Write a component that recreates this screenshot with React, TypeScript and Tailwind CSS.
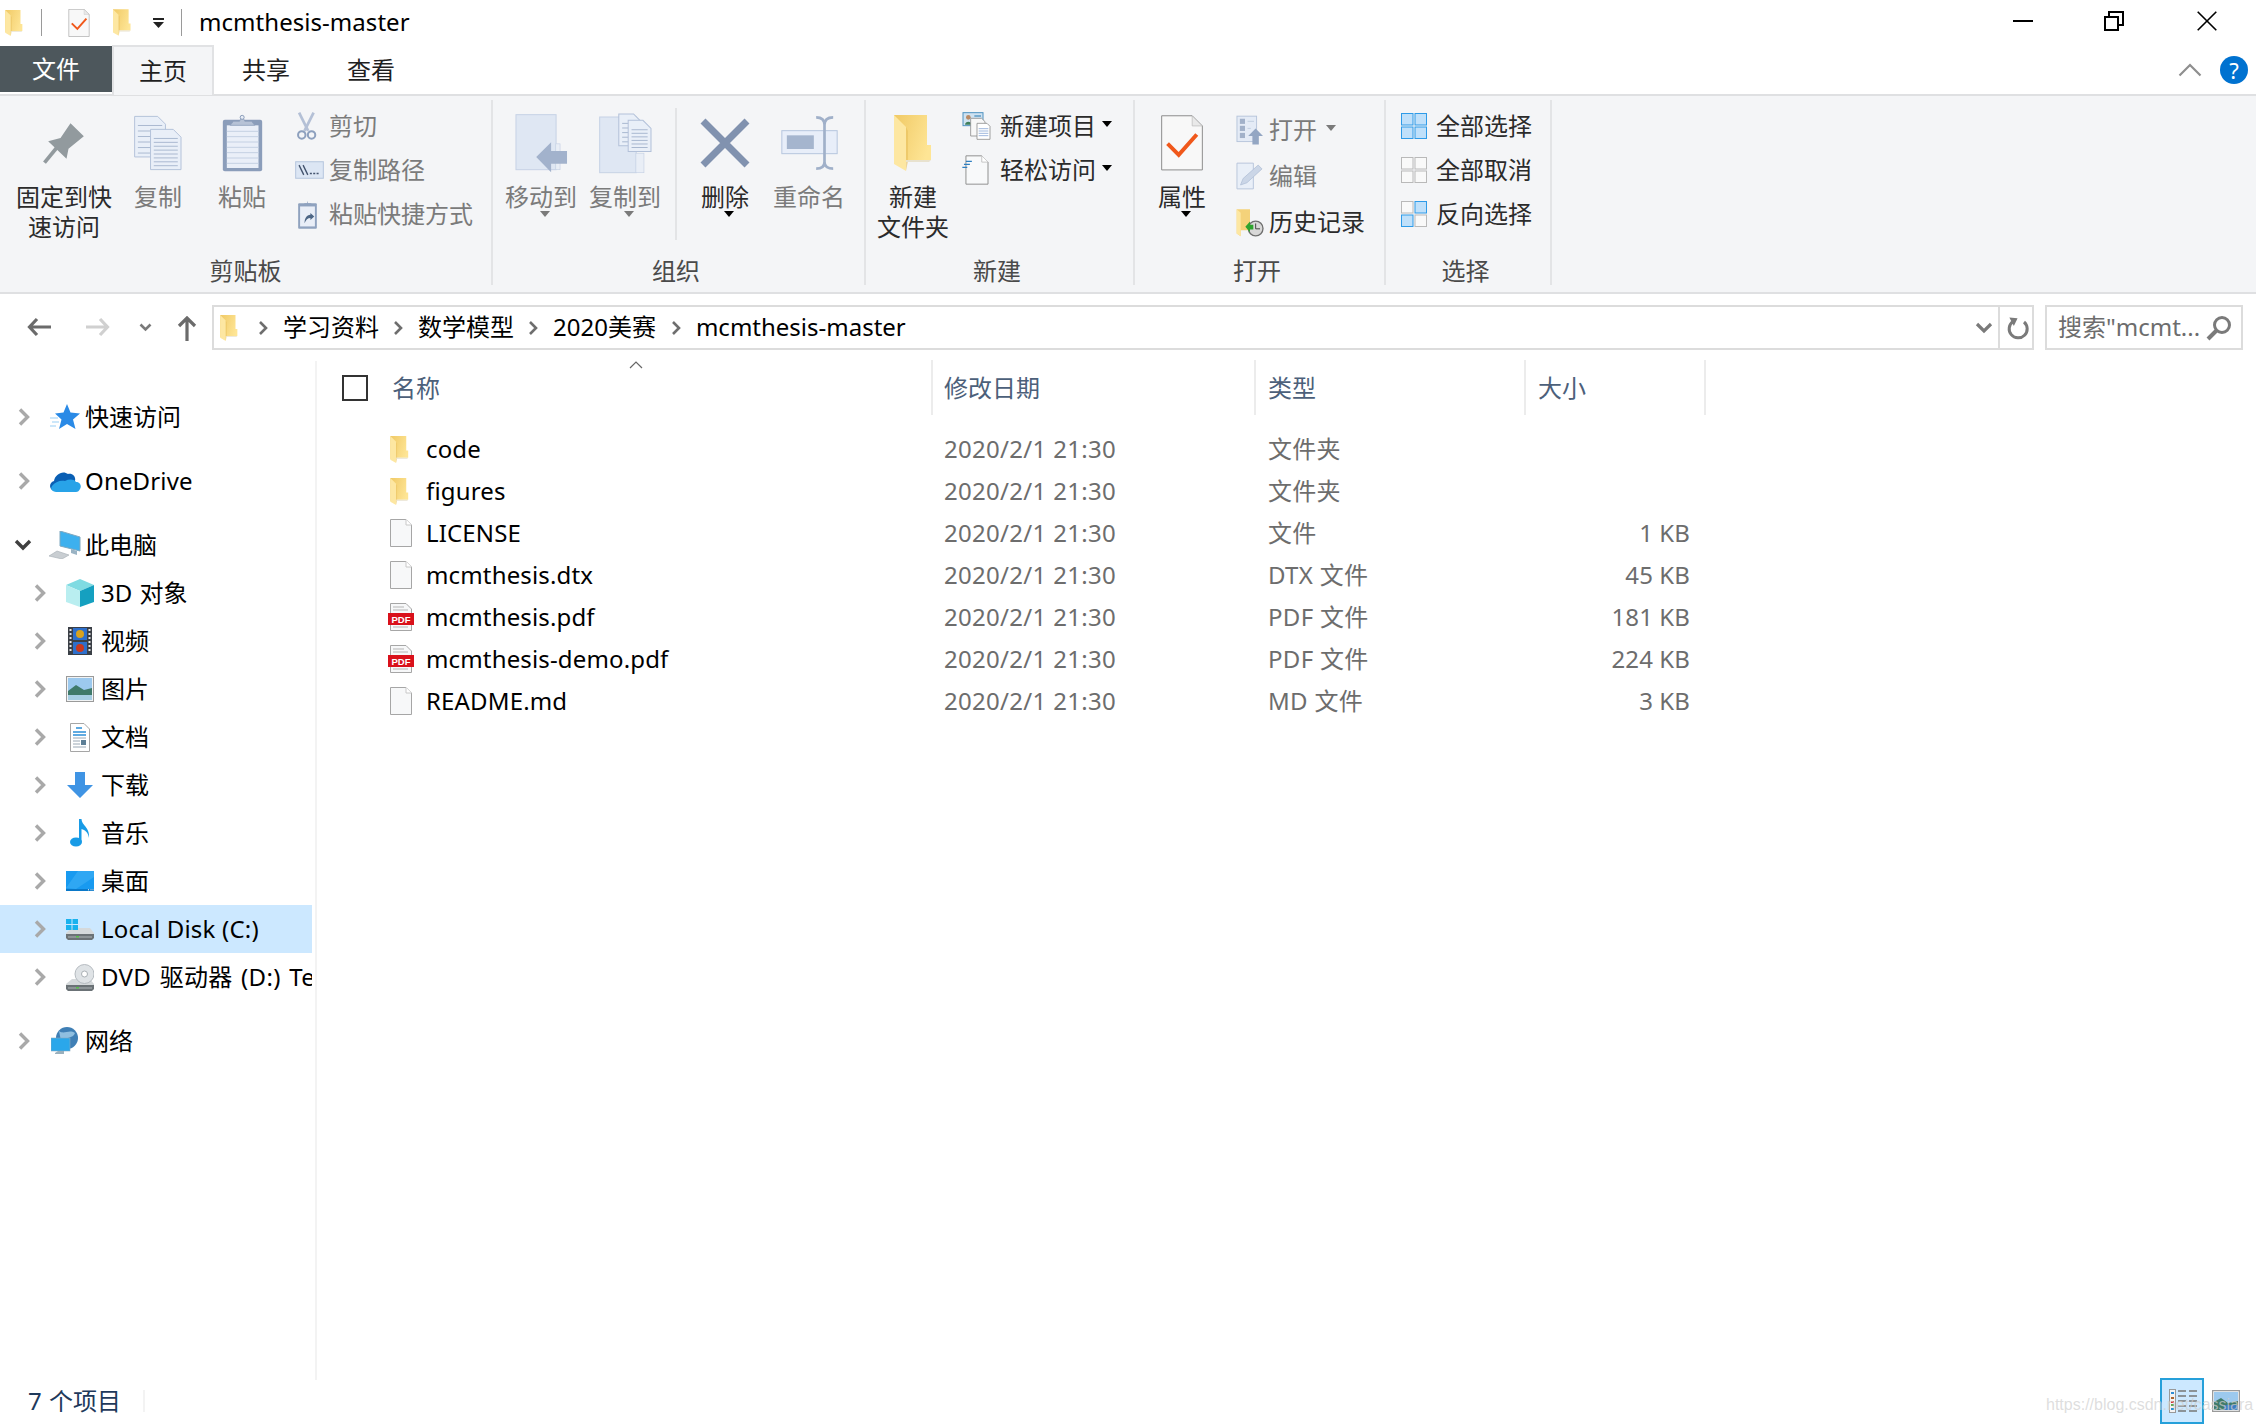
import React from "react";

const Folder = ({ w, h }: { w: number; h: number }) => (
  <svg width={w} height={h} viewBox="0 0 38 56" className="shrink-0">
    <defs>
      <linearGradient id="fg" x1="0" y1="0" x2="1" y2="0.5">
        <stop offset="0" stopColor="#f0c965" />
        <stop offset="1" stopColor="#fee595" />
      </linearGradient>
    </defs>
    <path d="M0 0H33V30H37V45H12V54L0 47Z" fill="url(#fg)" />
    <path d="M0 0L12 12V56L0 49Z" fill="#fde7a2" />
    <path d="M12 12V56L14 46V16Z" fill="#e8bf5e" opacity=".6" />
    <path d="M12 45H37L35 47H12Z" fill="#e8e2cf" />
  </svg>
);

const BlankFile = () => (
  <svg width="22" height="28" viewBox="0 0 22 28" className="shrink-0">
    <path d="M.5.5H16L21.5 6V27.5H.5Z" fill="#f7f8f9" stroke="#a6a6a6" />
    <path d="M16 .5V6H21.5" fill="#fff" stroke="#c8c8c8" />
  </svg>
);

const PdfFile = () => (
  <svg width="26" height="28" viewBox="0 0 26 28" className="shrink-0">
    <path d="M2.5.5H18L23.5 6V27.5H2.5Z" fill="#f7f8f9" stroke="#a6a6a6" />
    <path d="M5 4H16M5 7H20M5 24H20" stroke="#b5b5b5" />
    <rect x="0" y="10" width="26" height="12" fill="#d9111b" />
    <text x="13" y="19.5" textAnchor="middle" fontSize="9.5" fontWeight="700" fill="#fff" fontFamily="Liberation Sans, sans-serif">PDF</text>
  </svg>
);

const Chevron = ({ open, className = "" }: { open?: boolean; className?: string }) =>
  open ? (
    <svg width="18" height="12" viewBox="0 0 18 12" className={className}>
      <path d="M2 2L9 9L16 2" fill="none" stroke="#404040" strokeWidth="3.4" />
    </svg>
  ) : (
    <svg width="12" height="18" viewBox="0 0 12 18" className={className}>
      <path d="M2 1.5L9.5 9L2 16.5" fill="none" stroke="#a9a9a9" strokeWidth="3.4" />
    </svg>
  );

const Caret = ({ dim }: { dim?: boolean }) => (
  <svg width="10" height="6" viewBox="0 0 10 6" className="shrink-0 block">
    <path d="M0 0H10L5 6Z" fill={dim ? "#7a7a7a" : "#000"} />
  </svg>
);

/* ribbon icons: viewBoxes follow measured crop coordinates */
const Pin = () => (
  <svg width="42" height="42" viewBox="130 62 125 126">
    <path d="M134 184L170 140" stroke="#929a9e" strokeWidth="11" />
    <path d="M145 120L182 110L212 66L252 105L206 142L200 172Z" fill="#929a9e" />
  </svg>
);
const Page = ({ x, y, w, h, lines = 6 }: { x: number; y: number; w: number; h: number; lines?: number }) => (
  <g>
    <path d={`M${x} ${y}H${x + w - 24}L${x + w} ${y + 24}V${y + h}H${x}Z`} fill="#e9eff8" stroke="#b3c1d9" strokeWidth="3" />
    {Array.from({ length: lines }).map((_, i) => (
      <path key={i} d={`M${x + 10} ${y + 28 + (i * (h - 40)) / Math.max(lines - 1, 1)}H${x + w - 10}`} stroke="#a9b8d0" strokeWidth="3" />
    ))}
  </g>
);
const CopyIcon = () => (
  <svg width="48" height="56" viewBox="403 40 148 168">
    <Page x={405} y={42} w={95} h={125} />
    <Page x={454} y={82} w={94} h={124} lines={8} />
  </svg>
);
const PasteIcon = () => (
  <svg width="41" height="58" viewBox="668 38 122 174">
    <rect x="670" y="55" width="118" height="155" rx="6" fill="#8b9dba" />
    <rect x="682" y="72" width="95" height="128" fill="#eaeff8" />
    {[0, 1, 2, 3, 4, 5, 6].map((i) => (
      <path key={i} d={`M682 ${90 + i * 16}H777`} stroke="#c4d0e3" strokeWidth="3" />
    ))}
    <path d="M692 72L702 60H720L728 44L736 60H756L766 72Z" fill="#b6c2d6" stroke="#8b9dba" strokeWidth="2" />
    <circle cx="728" cy="48" r="6" fill="#e9eef6" stroke="#8b9dba" strokeWidth="3" />
  </svg>
);
const Scissors = () => (
  <svg width="21" height="29" viewBox="888 36 62 86">
    <path d="M897 38L924 92" stroke="#b4c0d6" strokeWidth="8" />
    <path d="M940 38L913 92" stroke="#b4c0d6" strokeWidth="8" />
    <circle cx="905" cy="104" r="11" fill="none" stroke="#8da0be" strokeWidth="6" />
    <circle cx="934" cy="104" r="11" fill="none" stroke="#8da0be" strokeWidth="6" />
  </svg>
);
const CopyPath = () => (
  <svg width="29" height="18" viewBox="878 185 86 53">
    <rect x="880" y="187" width="82" height="49" fill="#dce6f4" stroke="#b6c6de" strokeWidth="3" />
    <path d="M890 197L904 226M902 197L916 226" stroke="#44546e" strokeWidth="4" />
    <path d="M922 222h6M932 222h6M942 222h6" stroke="#44546e" strokeWidth="4" />
  </svg>
);
const PasteShort = () => (
  <svg width="21" height="29" viewBox="890 296 62 90">
    <rect x="892" y="306" width="58" height="79" rx="3" fill="#8fa2bf" />
    <rect x="898" y="316" width="46" height="62" fill="#e9eef7" />
    <path d="M906 314L912 306H920L921 298L923 306H932L938 314Z" fill="#8fa2bf" />
    <path d="M912 368C912 352 918 344 930 342V336L942 347L930 358V352C922 352 916 358 912 368Z" fill="#4d6685" />
  </svg>
);
const MoveIcon = () => (
  <svg width="55" height="59" viewBox="62 40 158 178">
    <rect x="64" y="42" width="121" height="166" fill="#dfe7f3" stroke="#c6d2e5" strokeWidth="3" />
    <rect x="184" y="130" width="13" height="78" fill="#e9eef6" stroke="#c6d2e5" strokeWidth="2" />
    <path d="M125 170L170 125V152H218V190H170V216Z" fill="#a2b2cc" />
  </svg>
);
const CopyTo = () => (
  <svg width="53" height="61" viewBox="314 32 158 178">
    <rect x="316" y="42" width="109" height="166" fill="#dfe7f3" stroke="#c6d2e5" strokeWidth="3" />
    <rect x="424" y="150" width="24" height="58" fill="#e9eef6" stroke="#c6d2e5" strokeWidth="2" />
    <Page x={373} y={33} w={68} h={95} lines={5} />
    <Page x={401} y={52} w={68} h={93} lines={6} />
  </svg>
);
const DeleteIcon = () => (
  <svg width="50" height="50" viewBox="603 51 150 150">
    <path d="M612 60L744 192M744 60L612 192" stroke="#8192af" strokeWidth="21" />
  </svg>
);
const RenameIcon = () => (
  <svg width="57" height="54" viewBox="845 44 170 162">
    <rect x="847" y="88" width="166" height="69" fill="#e8eef9" stroke="#b6c6de" strokeWidth="3" />
    <rect x="862" y="102" width="81" height="41" fill="#a5b5ce" />
    <path d="M950 48C964 48 975 54 975 70V182C975 196 964 202 950 202M1001 48C987 48 975 54 975 70M1001 202C987 202 975 196 975 182" fill="none" stroke="#a0b0c9" strokeWidth="8" />
  </svg>
);
const NewItem = () => (
  <svg width="29" height="28" viewBox="252 36 85 84">
    <rect x="254" y="38" width="60" height="39" fill="#cfe2f1" stroke="#4e92c0" strokeWidth="3" />
    <circle cx="270" cy="52" r="7" fill="#b98a66" />
    <path d="M260 74C260 62 280 62 280 74Z" fill="#3f7f5a" />
    <path d="M288 48h20" stroke="#4e92c0" strokeWidth="4" />
    <path d="M277 55H310L320 65V108H277Z" fill="#f8f8f8" stroke="#8f8f8f" strokeWidth="2.5" />
    <path d="M296 70H326L335 79V118H296Z" fill="#fff" stroke="#8f8f8f" strokeWidth="2.5" />
    <path d="M301 86H330M301 93H330M301 100H330M301 107H330" stroke="#8da9d6" strokeWidth="2.5" />
  </svg>
);
const EasyAccess = () => (
  <svg width="27" height="30" viewBox="246 164 82 90">
    <path d="M258 166H306L325 185V252H258Z" fill="#f8f9fa" stroke="#8f8f8f" strokeWidth="3" />
    <path d="M306 166V185H325" fill="#fff" stroke="#bbb" strokeWidth="2.5" />
    <path d="M258 183H276M252 192H270M247 201H262" stroke="#2f7fc1" strokeWidth="4" />
  </svg>
);
const PropsIcon = ({ w = 42, h = 56 }: { w?: number; h?: number }) => (
  <svg width={w} height={h} viewBox="845 41 128 170" className="shrink-0">
    <path d="M847 43H940L971 74V208H847Z" fill="#f8f8f8" stroke="#8b8b8b" strokeWidth="3" />
    <path d="M940 43V74H971Z" fill="#e9e9e9" stroke="#b5b5b5" strokeWidth="2" />
    <path d="M865 128L899 162L954 100" fill="none" stroke="#f0581b" strokeWidth="12" />
  </svg>
);
const OpenIcon = () => (
  <svg width="27" height="30" viewBox="1066 43 84 92">
    <rect x="1069" y="46" width="61" height="79" fill="#e4ebf6" stroke="#b7c5db" strokeWidth="3" />
    <rect x="1078" y="54" width="16" height="16" fill="#a2b1c9" />
    <rect x="1078" y="76" width="16" height="16" fill="#a2b1c9" />
    <rect x="1078" y="98" width="16" height="16" fill="#a2b1c9" />
    <path d="M1102 62h20M1102 84h10" stroke="#c2cee0" strokeWidth="3" />
    <path d="M1127 84L1150 108H1137V134H1117V108H1104Z" fill="#93a6c3" />
  </svg>
);
const EditIcon = () => (
  <svg width="27" height="28" viewBox="1066 181 84 86">
    <path d="M1069 184H1120V264H1069Z" fill="#e9eff8" stroke="#b7c5db" strokeWidth="3" />
    <path d="M1080 252L1088 232L1135 190L1147 202L1100 245Z" fill="#cbd6e7" stroke="#a9b9d2" strokeWidth="2" />
  </svg>
);
const HistoryIcon = () => (
  <svg width="28" height="29" viewBox="1066 324 84 86">
    <path d="M1068 327H1108V390H1080V408L1068 400Z" fill="#f4d27a" />
    <path d="M1068 327L1080 338V408L1068 400Z" fill="#fde7a2" />
    <circle cx="1125" cy="385" r="22" fill="#d8d8d8" stroke="#6f6f6f" strokeWidth="4" />
    <path d="M1125 370V386H1138" fill="none" stroke="#444" strokeWidth="3" />
    <path d="M1094 380L1108 364V374H1118V388H1108V396Z" fill="#2ea32e" />
  </svg>
);
const Panes = ({ cells }: { cells: boolean[] }) => (
  <svg width="26" height="26" viewBox="0 0 26 26">
    {[
      [0.5, 0.5],
      [14, 0.5],
      [0.5, 14],
      [14, 14],
    ].map(([x, y], i) =>
      cells[i] ? (
        <rect key={i} x={x} y={y} width="11.5" height="11.5" fill="#bfe0fa" stroke="#2e9be8" />
      ) : (
        <rect key={i} x={x} y={y} width="11.5" height="11.5" fill="#f9f9f9" stroke="#b9b9b9" />
      )
    )}
  </svg>
);

/* nav pane icons */
const Star = () => (
  <svg width="30" height="26" viewBox="0 0 30 26">
    <path d="M17 0L20.5 8.5L30 9.5L23 15.5L25.5 25L17 20L9 25L11.5 15.5L5 9.5L13.5 8.5Z" fill="#2a8ae6" />
    <path d="M0 14H8M2 18H9M0 22H6" stroke="#9ad0f6" strokeWidth="1.2" />
  </svg>
);
const OneDrive = () => (
  <svg width="32" height="22" viewBox="0 0 32 22">
    <path d="M7 21C0 21-1 13 5 11C6 4 14 0 19 4C24 3 27 7 26 11L7 21Z" fill="#0a5fb4" />
    <path d="M7 22C3 22 1 19 3 16C6 12 11 10 16 11C20 9 25 9 27 12C31 12 33 16 31 19C30 21 29 22 27 22Z" fill="#28a3e8" />
  </svg>
);
const ThisPC = () => (
  <svg width="32" height="28" viewBox="0 0 32 28">
    <path d="M11 0L31 6V20L11 15Z" fill="#3db0ee" stroke="#7fa8c0" />
    <path d="M22 18L28 20V24L22 22Z" fill="#9ab3c4" />
    <path d="M0 25L8 20L20 24L13 28Z" fill="#c9ced2" stroke="#a5adb3" strokeWidth=".6" />
  </svg>
);
const Cube = () => (
  <svg width="28" height="28" viewBox="0 0 28 28">
    <path d="M14 0L28 6L14 12L0 6Z" fill="#7fdbe2" />
    <path d="M0 6L14 12V28L0 23Z" fill="#b9eef0" />
    <path d="M28 6L14 12V28L28 23Z" fill="#15a0c0" />
  </svg>
);
const Film = () => (
  <svg width="24" height="28" viewBox="0 0 24 28">
    <rect width="24" height="28" fill="#3a3f46" />
    <rect x="5" y="1" width="14" height="12" fill="#2e6fcb" />
    <rect x="5" y="15" width="14" height="12" fill="#2e6fcb" />
    <circle cx="12" cy="7" r="4" fill="#d9a21e" />
    <circle cx="12" cy="21" r="4" fill="#c9381f" />
    <path d="M2.5 2V26M21.5 2V26" stroke="#e5e5e5" strokeWidth="2" strokeDasharray="2 2" />
  </svg>
);
const Picture = () => (
  <svg width="28" height="26" viewBox="0 0 28 26">
    <rect x=".5" y=".5" width="27" height="25" fill="#f1f3f4" stroke="#9a9a9a" />
    <rect x="2" y="2" width="24" height="22" fill="#9cc9ee" />
    <path d="M2 15L10 9L18 14L26 12V24H2Z" fill="#3f7a6a" />
    <rect x="2" y="19" width="24" height="5" fill="#a7cfe4" />
  </svg>
);
const DocIcon = () => (
  <svg width="20" height="29" viewBox="0 0 20 29">
    <path d="M.5.5H14L19.5 6V28.5H.5Z" fill="#fff" stroke="#a6a6a6" />
    <path d="M6 5H12M3 9H16M3 12H16" stroke="#2b8fd8" strokeWidth="1.4" />
    <path d="M3 15H16M3 18H10M3 21H10M3 24H16" stroke="#9aa8b5" />
    <rect x="11" y="17" width="5" height="5" fill="#5d7f96" />
  </svg>
);
const Download = () => (
  <svg width="26" height="26" viewBox="0 0 26 26">
    <path d="M8 0H18V13H26L13 26L0 13H8Z" fill="#3f94e4" />
  </svg>
);
const Note = () => (
  <svg width="20" height="28" viewBox="0 0 20 28">
    <ellipse cx="6" cy="23" rx="6" ry="4.5" fill="#189be6" />
    <path d="M9 0H11.5C12 7 20 8 19 19C18 13 15 11 11.5 10V23H9Z" fill="#189be6" />
  </svg>
);
const Desktop = () => (
  <svg width="28" height="20" viewBox="0 0 28 20">
    <rect width="28" height="20" fill="#189af0" />
    <path d="M0 17L12 0H28V6L10 18Z" fill="#3fb0f5" opacity=".6" />
    <rect y="18" width="28" height="2" fill="#0a78c8" />
    <path d="M22 18.8h1M24.5 18.8h1M26.5 18.8h1" stroke="#fff" />
  </svg>
);
const Disk = () => (
  <svg width="28" height="21" viewBox="0 0 28 21">
    <path d="M0 14L6 9H24L28 14V19L24 21H2L0 19Z" fill="#d5d9db" />
    <path d="M0 15H28V19L26 21H2L0 19Z" fill="#6b7276" />
    <rect x="2" y="17" width="24" height="2" fill="#8d9497" />
    <rect x="10" y="17" width="3" height="1.5" fill="#58c04a" />
    <rect y="0" width="5.5" height="5" fill="#19b2ee" />
    <rect x="6.5" y="0" width="5.5" height="5" fill="#19b2ee" />
    <rect y="6" width="5.5" height="5" fill="#19b2ee" />
    <rect x="6.5" y="6" width="5.5" height="5" fill="#19b2ee" />
  </svg>
);
const Dvd = () => (
  <svg width="28" height="27" viewBox="0 0 28 27">
    <path d="M0 20L6 15H24L28 20V25L24 27H2L0 25Z" fill="#d5d9db" />
    <circle cx="18.5" cy="10" r="9.5" fill="#dfe3e6" stroke="#b5bbc0" />
    <circle cx="18.5" cy="10" r="3" fill="#fff" stroke="#aab0b5" />
    <path d="M0 21H28V25L26 27H2L0 25Z" fill="#6b7276" />
    <rect x="2" y="23" width="24" height="2" fill="#8d9497" />
    <rect x="10" y="23" width="3" height="1.5" fill="#58c04a" />
  </svg>
);
const Network = () => (
  <svg width="28" height="28" viewBox="0 0 28 28">
    <circle cx="16" cy="11" r="11" fill="#3f7fb5" />
    <path d="M8 4C13 8 18 2 24 6C22 12 14 10 10 14Z" fill="#8fbfe0" />
    <rect x="0" y="11" width="19" height="13" fill="#2aa7ea" stroke="#85a9bf" strokeWidth=".6" />
    <path d="M7 24H13V27H4V26Z" fill="#9ab0bd" />
  </svg>
);

const TEXT = "font-['Noto_Sans','Noto_Sans_CJK_SC',sans-serif]";

const Big = ({ w, icon, lines, dim, caret }: { w: number; icon: React.ReactNode; lines: string[]; dim?: boolean; caret?: "dim" | "dark" }) => (
  <div className="flex flex-col items-center shrink-0" style={{ width: w }}>
    <div className="h-[78px] flex items-center justify-center">{icon}</div>
    {lines.map((l) => (
      <div key={l} className={`h-[30px] leading-[30px] whitespace-nowrap ${dim ? "text-[#7b7b7b]" : "text-[#2b2b2b]"}`}>
        {l}
      </div>
    ))}
    {caret && (
      <div className="-mt-[1px] ml-[8px]">
        <Caret dim={caret === "dim"} />
      </div>
    )}
  </div>
);

const Small = ({ w, h, icon, text, dim, caret, gap = 6 }: { w: number; h: number; icon: React.ReactNode; text: string; dim?: boolean; caret?: "dim" | "dark"; gap?: number }) => (
  <div className="flex items-center" style={{ height: h }}>
    <div className="flex items-center shrink-0" style={{ width: w }}>
      {icon}
    </div>
    <span className={`whitespace-nowrap ${dim ? "text-[#7b7b7b]" : "text-[#2b2b2b]"}`}>{text}</span>
    {caret && (
      <span className="-mt-[4px]" style={{ marginLeft: gap }}>
        <Caret dim={caret === "dim"} />
      </span>
    )}
  </div>
);

const Group = ({ w, label, labelShift = 0, children }: { w: number; label: string; labelShift?: number; children: React.ReactNode }) => (
  <div className="h-[185px] shrink-0 flex flex-col border-r-2 border-[#e3e4e6]" style={{ width: w }}>
    <div className="flex-1 flex pt-[4px] min-h-0">{children}</div>
    <div className="h-[29px] leading-[29px] text-center text-[#4a4a4a]" style={{ paddingRight: labelShift }}>
      {label}
    </div>
  </div>
);

const NavRow = ({ child, icon, text, active, open, textCls = "" }: { child?: boolean; icon: React.ReactNode; text: string; active?: boolean; open?: boolean; textCls?: string }) => (
  <div className={`h-[48px] flex items-center whitespace-nowrap overflow-hidden ${active ? "bg-[#cce8ff]" : ""}`}>
    <div className={`shrink-0 flex justify-center ${child ? "w-[32px] ml-[24px]" : open ? "w-[32px] ml-[7px] mr-[1px]" : "w-[32px] ml-[8px]"}`}>
      <Chevron open={open} />
    </div>
    <div className={`shrink-0 flex justify-center ${child ? "w-[30px] ml-[9px]" : "w-[32px] ml-[9px]"}`}>{icon}</div>
    <span className={`text-black ${child ? "ml-[6px]" : "ml-[4px]"} ${textCls}`}>{text}</span>
  </div>
);

const files = [
  { n: "code", t: "文件夹", s: "", k: "folder" },
  { n: "figures", t: "文件夹", s: "", k: "folder" },
  { n: "LICENSE", t: "文件", s: "1 KB", k: "blank" },
  { n: "mcmthesis.dtx", t: "DTX 文件", s: "45 KB", k: "blank" },
  { n: "mcmthesis.pdf", t: "PDF 文件", s: "181 KB", k: "pdf" },
  { n: "mcmthesis-demo.pdf", t: "PDF 文件", s: "224 KB", k: "pdf" },
  { n: "README.md", t: "MD 文件", s: "3 KB", k: "blank" },
];

const Crumb = ({ text, cls }: { text: string; cls: string }) => (
  <>
    <svg width="10" height="16" viewBox="0 0 10 16" className={cls}>
      <path d="M2 2L8 8L2 14" fill="none" stroke="#6e6e6e" strokeWidth="2.6" />
    </svg>
    <span className="ml-[15px] -mt-[2px] whitespace-nowrap text-black">{text}</span>
  </>
);

export default function App() {
  return (
    <div className={`relative w-[2256px] h-[1424px] bg-white overflow-hidden flex flex-col text-[24px] ${TEXT}`}>
      {/* title bar */}
      <div className="h-[45px] flex items-center shrink-0">
        <div className="ml-[5px]">
          <Folder w={18} h={26} />
        </div>
        <div className="ml-[18px] w-[1px] h-[27px] bg-[#9a9a9a]" />
        <div className="ml-[26px]">
          <PropsIcon w={22} h={28} />
        </div>
        <div className="ml-[23px]">
          <Folder w={18} h={27} />
        </div>
        <div className="ml-[22px] flex flex-col items-center gap-[2px]">
          <div className="w-[11px] h-[2px] bg-[#222]" />
          <svg width="11" height="6" viewBox="0 0 11 6">
            <path d="M0 0H11L5.5 6Z" fill="#222" />
          </svg>
        </div>
        <div className="ml-[17px] w-[1px] h-[27px] bg-[#9a9a9a]" />
        <span className="ml-[17px] -mt-[2px] text-black tracking-[0.05px]">mcmthesis-master</span>
        <div className="ml-auto flex items-center -mt-[3px]">
          <div className="w-[20px] h-[2px] bg-black mr-[71px]" />
          <svg width="20" height="20" viewBox="0 0 20 20" className="mr-[73px]">
            <path d="M1 6H14V19H1Z M5 6V1H19V14H14" fill="none" stroke="#000" strokeWidth="2" />
          </svg>
          <svg width="20" height="20" viewBox="0 0 20 20" className="mr-[39px]">
            <path d="M.7.7L19.3 19.3M19.3.7L.7 19.3" stroke="#000" strokeWidth="1.6" />
          </svg>
        </div>
      </div>

      {/* tabs */}
      <div className="h-[49px] flex shrink-0 relative">
        <div className="w-[112px] h-[46px] mt-[1px] bg-[#4d575c] text-white flex items-center justify-center pb-[1px]">文件</div>
        <div className="w-[102px] h-[50px] bg-[#f4f5f7] border-x-2 border-t-2 border-[#e1e2e4] flex items-center justify-center text-[#1f1f1f] z-10 box-border">主页</div>
        <div className="w-[104px] flex items-center justify-center text-[#1f1f1f]">共享</div>
        <div className="w-[106px] flex items-center justify-center text-[#1f1f1f]">查看</div>
        <div className="ml-auto flex items-center">
          <svg width="24" height="14" viewBox="0 0 24 14" className="mr-[18px] mt-[1px]">
            <path d="M1.5 12.5L12 2L22.5 12.5" fill="none" stroke="#8f8f8f" strokeWidth="2.2" />
          </svg>
          <div className="w-[28px] h-[28px] rounded-full bg-[#0072d0] text-white text-[22px] leading-[28px] text-center mr-[8px]">?</div>
        </div>
      </div>

      {/* ribbon */}
      <div className="h-[200px] bg-[#f4f5f7] border-y-2 border-[#dfe0e2] shrink-0 flex pt-[4px]">
        <Group w={493} label="剪贴板">
          <Big w={128} icon={<Pin />} lines={["固定到快", "速访问"]} />
          <Big w={60} icon={<CopyIcon />} lines={["复制"]} dim />
          <Big w={108} icon={<PasteIcon />} lines={["粘贴"]} dim />
          <div className="-ml-[1px]">
            <Small w={34} h={44} icon={<span className="ml-[1px]"><Scissors /></span>} text="剪切" dim />
            <Small w={34} h={44} icon={<CopyPath />} text="复制路径" dim />
            <Small w={34} h={44} icon={<span className="ml-[2px]"><PasteShort /></span>} text="粘贴快捷方式" dim />
          </div>
        </Group>
        <Group w={373} label="组织" labelShift={5}>
          <div className="w-[6px]" />
          <Big w={84} icon={<MoveIcon />} lines={["移动到"]} dim caret="dim" />
          <Big w={84} icon={<CopyTo />} lines={["复制到"]} dim caret="dim" />
          <div className="ml-[8px] mt-[4px] w-[2px] h-[132px] bg-[#e3e4e6] shrink-0" />
          <Big w={96} icon={<DeleteIcon />} lines={["删除"]} caret="dark" />
          <Big w={72} icon={<RenameIcon />} lines={["重命名"]} dim />
        </Group>
        <Group w={269} label="新建" labelShift={5}>
          <Big w={94} icon={<Folder w={38} h={56} />} lines={["新建", "文件夹"]} />
          <div className="ml-[2px]">
            <Small w={38} h={44} icon={<NewItem />} text="新建项目" caret="dark" />
            <Small w={38} h={44} icon={<EasyAccess />} text="轻松访问" caret="dark" />
          </div>
        </Group>
        <Group w={251} label="打开" labelShift={5}>
          <Big w={94} icon={<PropsIcon />} lines={["属性"]} caret="dark" />
          <div className="ml-[7px] pt-[3px]">
            <Small w={33} h={46} icon={<OpenIcon />} text="打开" dim caret="dim" gap={9} />
            <Small w={33} h={46} icon={<EditIcon />} text="编辑" dim />
            <Small w={33} h={46} icon={<HistoryIcon />} text="历史记录" />
          </div>
        </Group>
        <Group w={166} label="选择" labelShift={5}>
          <div className="ml-[15px]">
            <Small w={35} h={44} icon={<Panes cells={[true, true, true, true]} />} text="全部选择" />
            <Small w={35} h={44} icon={<Panes cells={[false, false, false, false]} />} text="全部取消" />
            <Small w={35} h={44} icon={<Panes cells={[false, true, true, false]} />} text="反向选择" />
          </div>
        </Group>
      </div>

      {/* nav bar */}
      <div className="h-[61px] flex items-start pt-[11px] shrink-0">
        <div className="w-[212px] h-[44px] flex items-center shrink-0">
          <svg width="24" height="20" viewBox="0 0 24 20" className="ml-[27px]">
            <path d="M10 2L2.5 10L10 18M3 10H24" fill="none" stroke="#6b6b6b" strokeWidth="3.2" />
          </svg>
          <svg width="24" height="20" viewBox="0 0 24 20" className="ml-[35px]">
            <path d="M14 2L21.5 10L14 18M0 10H21" fill="none" stroke="#d0d0d0" strokeWidth="3.2" />
          </svg>
          <svg width="13" height="9" viewBox="0 0 13 9" className="ml-[29px]">
            <path d="M1.5 1.5L6.5 6.5L11.5 1.5" fill="none" stroke="#7a7a7a" strokeWidth="2.6" />
          </svg>
          <svg width="20" height="25" viewBox="0 0 20 25" className="ml-[25px] mt-[2px]">
            <path d="M2 10L10 2L18 10M10 3V25" fill="none" stroke="#6b6b6b" strokeWidth="3.2" />
          </svg>
        </div>
        <div className="w-[1822px] h-[45px] border-2 border-[#dcdcdc] flex items-center shrink-0">
          <div className="ml-[6px]">
            <Folder w={18} h={26} />
          </div>
          <Crumb text="学习资料" cls="ml-[20px] shrink-0" />
          <Crumb text="数学模型" cls="ml-[14px] shrink-0" />
          <Crumb text="2020美赛" cls="ml-[14px] shrink-0" />
          <Crumb text="mcmthesis-master" cls="ml-[15px] shrink-0" />
          <div className="ml-auto flex items-center h-full">
            <svg width="18" height="12" viewBox="0 0 18 12" className="mr-[5px]">
              <path d="M2 2L9 9L16 2" fill="none" stroke="#7a7a7a" strokeWidth="3.2" />
            </svg>
            <div className="w-[2px] h-full bg-[#dcdcdc]" />
            <svg width="22" height="24" viewBox="0 0 22 24" className="ml-[7px] mr-[3px]">
              <path d="M6 5.5A9 9 0 1 0 17 6" fill="none" stroke="#7a7a7a" strokeWidth="3" />
              <path d="M3 1L11 3L6 10Z" fill="#7a7a7a" transform="rotate(-10 6 5)" />
            </svg>
          </div>
        </div>
        <div className="ml-[11px] w-[198px] h-[45px] border-2 border-[#dcdcdc] flex items-center shrink-0">
          <span className="ml-[11px] -mt-[2px] text-[#6d6d6d] whitespace-nowrap">搜索"mcmt...</span>
          <svg width="26" height="26" viewBox="0 0 26 26" className="ml-auto mr-[9px]">
            <circle cx="16" cy="10" r="7.5" fill="none" stroke="#7a7a7a" strokeWidth="3" />
            <path d="M11 15L2 24" stroke="#7a7a7a" strokeWidth="4" />
          </svg>
        </div>
      </div>

      {/* body */}
      <div className="flex-1 flex min-h-0">
        <div className="w-[317px] shrink-0 border-r-2 border-[#f3f3f3] mt-[6px] -mb-[2px]">
          <div className="w-[312px] pt-[32px]">
            <NavRow icon={<Star />} text="快速访问" />
            <div className="h-[16px]" />
            <NavRow icon={<OneDrive />} text="OneDrive" textCls="tracking-[0.15px]" />
            <div className="h-[16px]" />
            <NavRow icon={<ThisPC />} text="此电脑" open />
            <NavRow child icon={<Cube />} text="3D 对象" textCls="[word-spacing:1px]" />
            <NavRow child icon={<Film />} text="视频" />
            <NavRow child icon={<Picture />} text="图片" />
            <NavRow child icon={<DocIcon />} text="文档" />
            <NavRow child icon={<Download />} text="下载" />
            <NavRow child icon={<Note />} text="音乐" />
            <NavRow child icon={<Desktop />} text="桌面" />
            <NavRow child icon={<Disk />} text="Local Disk (C:)" active textCls="tracking-[0.2px]" />
            <NavRow child icon={<Dvd />} text="DVD 驱动器 (D:) Te" textCls="tracking-[0.3px] [word-spacing:2px]" />
            <div className="h-[16px]" />
            <NavRow icon={<Network />} text="网络" />
          </div>
        </div>
        <div className="flex-1 relative">
          {/* header */}
          <div className="flex h-[55px] mt-[5px] items-stretch text-[#4c607a]">
            <div className="w-[616px] flex items-center border-r-2 border-[#ececec] shrink-0">
              <div className="ml-[25px] w-[26px] h-[26px] border-2 border-[#333] shrink-0" />
              <span className="ml-[24px]">名称</span>
            </div>
            <div className="w-[323px] flex items-center pl-[11px] border-r-2 border-[#ececec] shrink-0">修改日期</div>
            <div className="w-[270px] flex items-center pl-[12px] border-r-2 border-[#ececec] shrink-0">类型</div>
            <div className="w-[180px] flex items-center pl-[12px] border-r-2 border-[#ececec] shrink-0">大小</div>
          </div>
          <svg width="14" height="8" viewBox="0 0 14 8" className="absolute left-[312px] top-[6px]">
            <path d="M1 7L7 1L13 7" fill="none" stroke="#666" strokeWidth="1.2" />
          </svg>
          {/* rows */}
          <div className="mt-[13px]">
            {files.map((f) => (
              <div key={f.n} className="flex h-[42px] items-center whitespace-nowrap">
                <div className="w-[616px] flex items-center shrink-0 pl-[71px]">
                  <div className="w-[38px] flex justify-start shrink-0 pl-[2px]">
                    {f.k === "folder" ? <Folder w={19} h={27} /> : f.k === "pdf" ? <span className="-ml-[2px]"><PdfFile /></span> : <BlankFile />}
                  </div>
                  <span className="text-black tracking-[0.15px]">{f.n}</span>
                </div>
                <div className="w-[323px] pl-[11px] text-[#6d6d6d] shrink-0 tracking-[0.3px]">2020/2/1 21:30</div>
                <div className="w-[270px] pl-[12px] text-[#6d6d6d] shrink-0 tracking-[0.3px]">{f.t}</div>
                <div className="w-[180px] pr-[16px] text-right text-[#6d6d6d] shrink-0 tracking-[0.1px]">{f.s}</div>
              </div>
            ))}
          </div>
        </div>
      </div>

      {/* status */}
      <div className="h-[46px] flex items-center shrink-0 relative">
        <span className="ml-[28px] text-[#1e395b] [word-spacing:1px]">7 个项目</span>
        <div className="ml-[22px] w-[2px] h-[22px] bg-[#f3f3f3]" />
        <div className="ml-auto mr-[16px] flex items-center">
          <div className="w-[44px] h-[46px] bg-[#cce8ff] border-2 border-[#26a0da] flex items-center justify-center pl-[2px]">
            <svg width="28" height="24" viewBox="0 0 28 24">
              <rect x=".5" y=".5" width="6" height="23" fill="#f3f3f3" stroke="#999" />
              <path d="M2 3h3v2H2z" fill="#2f8ed6" />
              <path d="M2 8h3v2H2z" fill="#a8642e" />
              <path d="M2 12h3v2H2z" fill="#d22" />
              <path d="M2 15h3v2H2z" fill="#6aa84f" />
              <path d="M2 19h3v2H2z" fill="#2f8ed6" />
              <path d="M9 2H17M20 2H28M9 7H17M20 7H28M9 12H17M20 12H28M9 17H17M20 17H28M9 22H17M20 22H28" stroke="#777" strokeWidth="1.4" />
            </svg>
          </div>
          <svg width="28" height="22" viewBox="0 0 28 22" className="ml-[8px]">
            <rect x=".5" y=".5" width="27" height="21" fill="#f1f3f4" stroke="#9a9a9a" strokeWidth="1.4" />
            <rect x="2" y="2" width="24" height="18" fill="#9cc9ee" />
            <path d="M2 12L9 8L16 13L26 11V20H2Z" fill="#3f7a6a" />
            <rect x="12" y="15" width="14" height="5" fill="#3a7cc2" />
          </svg>
        </div>
      </div>

      <div className="absolute left-[2046px] top-[1394px] text-[16px] leading-[22px] font-['Liberation_Sans',sans-serif] text-[#cfcfcf]/70 whitespace-nowrap pointer-events-none">
        https://blog.csdn.net/cassiara
      </div>
    </div>
  );
}
